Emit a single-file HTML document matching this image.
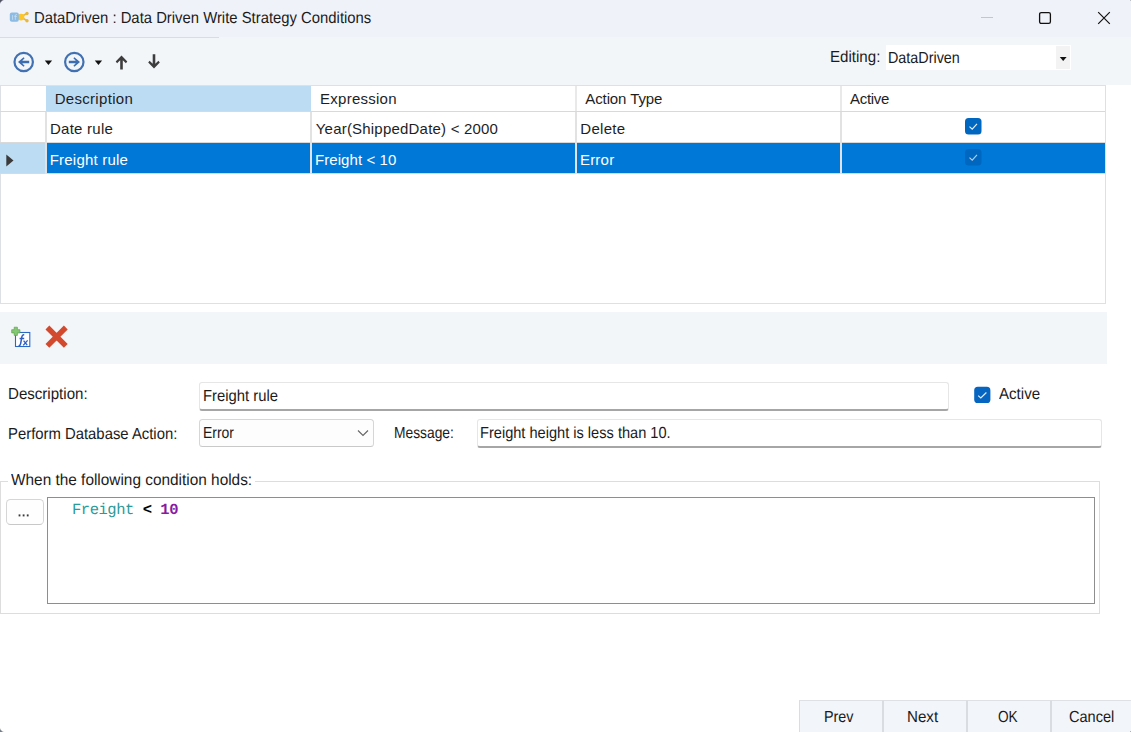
<!DOCTYPE html>
<html><head><meta charset="utf-8">
<style>
*{box-sizing:border-box;margin:0;padding:0}
html,body{width:1131px;height:732px;overflow:hidden;background:#fff;font-family:"Liberation Sans",sans-serif;}
.abs{position:absolute}
.t{position:absolute;white-space:nowrap;line-height:20px;height:20px;color:#1b1b1b;font-size:16px;text-rendering:geometricPrecision;transform-origin:0 50%;margin-top:1px}
.g{position:absolute;white-space:nowrap;line-height:20px;height:20px;color:#1e1e1e;font-size:15px}
.vl{position:absolute;width:2px;background:#e2e2e2}
.hl{position:absolute;height:1px;background:#d9d9d9}
.btn{position:absolute;top:700px;height:33px;background:#f2f5f9;border:1px solid #d9dce1;border-top-color:#dde0e5}
</style>
<style id="fit">
#title{left:33.66px !important;transform:scaleX(0.9280)}
#editing{left:829.75px !important;transform:scaleX(0.9436)}
#ddcombo{left:887.68px !important;transform:scaleX(0.8972)}
#ldesc{left:7.61px !important;transform:scaleX(0.9424)}
#vdesc{left:202.86px !important;transform:scaleX(0.9258)}
#lactive{left:998.86px !important;transform:scaleX(0.9423)}
#lperf{left:7.66px !important;transform:scaleX(0.9288)}
#verr{left:203.29px !important;transform:scaleX(0.8718)}
#lmsg{left:394.49px !important;transform:scaleX(0.8632)}
#vmsg{left:480.46px !important;transform:scaleX(0.9120)}
#lwhen{left:10.61px !important;transform:scaleX(0.9614)}
#bprev{left:824.42px !important;transform:scaleX(0.8965)}
#bnext{left:907.25px !important;transform:scaleX(0.9450)}
#bok{left:998.36px !important;transform:scaleX(0.8533)}
#bcancel{left:1069.49px !important;transform:scaleX(0.9106)}
#h1{left:54.65px !important;letter-spacing:0.311px}
#h2{left:320.12px !important;letter-spacing:0.241px}
#h3{left:585.27px !important;letter-spacing:-0.100px}
#h4{left:850.07px !important;letter-spacing:-0.308px}
#c11{left:50.00px !important;letter-spacing:0.244px}
#c21{left:49.71px !important;letter-spacing:0.217px}
#c12{left:315.75px !important;letter-spacing:0.205px}
#c13{left:580.32px !important;letter-spacing:0.295px}
#c22{left:314.89px !important;letter-spacing:0.097px}
#c23{left:579.90px !important;letter-spacing:0.236px}
</style></head><body>
<!-- title bar -->
<div class="abs" id="titlebar" style="left:0;top:0;width:1131px;height:37px;background:#eff2f9"></div>
<div class="abs" id="toolbar" style="left:0;top:37px;width:1131px;height:48px;background:#f3f6f9"></div>
<div class="abs" style="left:0;top:37px;width:219px;height:1px;background:#d9dce0"></div>
<div class="t" id="title" style="left:34px;top:8px">DataDriven : Data Driven Write Strategy Conditions</div>


<!-- title icon -->
<svg class="abs" id="ticon" style="left:8px;top:10px" width="22" height="14" viewBox="8 10 22 14">
<path d="M20.5 17L26.8 13.6M20.5 17L26.8 20.6" stroke="#e9b93a" stroke-width="1.7" stroke-linecap="round" fill="none"/>
<circle cx="27" cy="13.5" r="1.7" fill="#e8b83a"/><circle cx="27" cy="20.7" r="1.7" fill="#e8b83a"/>
<circle cx="21" cy="17.1" r="3.4" fill="#fcc62b"/>
<rect x="9.8" y="12.5" width="9" height="9.3" rx="2" fill="#8cbbe4"/>
<path d="M12.6 15.2v4.6M15.3 15v4.8M14.3 16.4h2.6M15.3 15.3q0.3-1 1.5-0.8" stroke="#c4dcf2" stroke-width="0.9" fill="none"/>
</svg>
<!-- window buttons -->
<div class="abs" style="left:981px;top:17px;width:12px;height:1px;background:#c4c6cb"></div>
<svg class="abs" style="left:1038px;top:11px" width="14" height="14"><rect x="1.6" y="1.6" width="10.8" height="10.8" rx="1.6" fill="none" stroke="#111" stroke-width="1.3"/></svg>
<svg class="abs" style="left:1097px;top:11px" width="14" height="14"><path d="M1.2 1.2L12.8 12.8M12.8 1.2L1.2 12.8" stroke="#111" stroke-width="1.2" fill="none"/></svg>
<!-- nav toolbar icons -->
<svg class="abs" id="nav" style="left:0;top:44px" width="180" height="36" viewBox="0 44 180 36">
<g fill="none" stroke="#4171b2" stroke-width="2.2">
<circle cx="23.7" cy="62" r="9.2"/><circle cx="74.3" cy="62" r="9.2"/>
</g>
<g fill="#3c6db0" stroke="none">
<path d="M18 62L23.6 57.2L24.6 58.3L22.2 60.8H29.2V63.2H22.2L24.6 65.7L23.6 66.8Z"/>
<path d="M80 62L74.4 57.2L73.4 58.3L75.8 60.8H68.8V63.2H75.8L73.4 65.7L74.4 66.8Z"/>
</g>
<path d="M44.8 60.5h7.3L48.45 64.9z" fill="#111"/>
<path d="M94.8 60.5h7.3L98.45 64.9z" fill="#111"/>
<g fill="#3d3d3d" stroke="none">
<path d="M121.5 55.6L127.3 61.6L125.9 63.2L122.8 60.2V69.5H120.2V60.2L117.1 63.2L115.7 61.6Z"/>
<path d="M154 68.4L159.8 62.4L158.4 60.8L155.3 63.8V54.3H152.7V63.8L149.6 60.8L148.2 62.4Z"/>
</g>
</svg>
<!-- editing combo -->
<div class="t" id="editing" style="left:830px;top:47px">Editing:</div>
<div class="abs" style="left:886px;top:45px;width:185px;height:25px;background:#fff"></div>
<div class="abs" style="left:1056px;top:46px;width:14px;height:23px;background:#f3f3f3"></div>
<div class="t" id="ddcombo" style="left:888px;top:48px">DataDriven</div>
<svg class="abs" style="left:1059px;top:56px" width="9" height="6"><path d="M0.8 1.1h6.8L4.2 4.9z" fill="#111"/></svg>

<!-- grid -->
<div class="abs" id="grid" style="left:0;top:85px;width:1106px;height:219px;background:#fff;border:1px solid #dde0e4"></div>
<div class="abs" style="left:46px;top:86px;width:265px;height:25px;background:#bcdcf4"></div>
<div class="abs" style="left:0;top:143px;width:45px;height:30px;background:#bcdcf4"></div>
<div class="abs" style="left:47px;top:143px;width:1058px;height:30px;background:#0078d7"></div>
<div class="hl" style="left:0;top:111px;width:1105px"></div>
<div class="hl" style="left:0;top:142px;width:1105px"></div>
<div class="hl" style="left:0;top:173px;width:1105px"></div>
<div class="vl" style="left:45px;top:112px;height:62px"></div>
<div class="vl" style="left:310px;top:112px;height:62px"></div>
<div class="vl" style="left:575px;top:112px;height:62px"></div>
<div class="vl" style="left:840px;top:112px;height:62px"></div>
<div class="vl" style="left:575px;top:86px;height:25px;background:#e9e9e9"></div>
<div class="vl" style="left:840px;top:86px;height:25px;background:#e9e9e9"></div>
<div class="g" id="h1" style="left:55px;top:89px">Description</div>
<div class="g" id="h2" style="left:320px;top:89px">Expression</div>
<div class="g" id="h3" style="left:585px;top:89px">Action Type</div>
<div class="g" id="h4" style="left:850px;top:89px">Active</div>
<div class="g" id="c11" style="left:50px;top:119px">Date rule</div>
<div class="g" id="c12" style="left:315px;top:119px">Year(ShippedDate) &lt; 2000</div>
<div class="g" id="c13" style="left:580px;top:119px">Delete</div>
<div class="g" id="c21" style="left:50px;top:150px;color:#fff">Freight rule</div>
<div class="g" id="c22" style="left:315px;top:150px;color:#fff">Freight &lt; 10</div>
<div class="g" id="c23" style="left:580px;top:150px;color:#fff">Error</div>
<svg class="abs" style="left:5px;top:153px" width="10" height="15"><path d="M1.3 1.6L8.5 7.5L1.3 13.4z" fill="#3a3a3a"/></svg>
<svg class="abs" style="left:965px;top:118px" width="17" height="17"><rect x="0" y="0" width="16.5" height="16.5" rx="3.5" fill="#0067c0"/><path d="M4.5 8.6l2.7 2.6L12 5.9" stroke="#eaf2fb" stroke-width="1.1" fill="none"/></svg>
<svg class="abs" style="left:965px;top:149px" width="17" height="17"><rect x="0" y="0" width="16.5" height="16.5" rx="3.5" fill="#0067c0"/><path d="M4.5 8.6l2.7 2.6L12 5.9" stroke="#b5d1ef" stroke-width="1.1" fill="none"/></svg>

<!-- toolbar 2 -->
<div class="abs" style="left:0;top:312px;width:1107px;height:52px;background:#f3f6f9"></div>
<svg class="abs" id="ico1" style="left:10px;top:325px" width="24" height="24" viewBox="10 325 24 24">
<rect x="15.5" y="332.5" width="14.3" height="14" fill="#fff" stroke="#2a68c6" stroke-width="1.1"/>
<path d="M18.6 345.6q1.6 0.3 2.1-2.2l1.1-6.3q0.5-2.6 2.4-2.2M19.6 338.6h4.6" stroke="#2c5fc4" stroke-width="1.5" fill="none"/>
<path d="M23.6 340.6l3.6 4.6M27.6 340.4l-4.4 5" stroke="#2c5fc4" stroke-width="1.35" fill="none"/>
<path d="M14.2 327.2h3.2v2.5h2.5v3.2h-2.5v2.5h-3.2v-2.5h-2.5v-3.2h2.5z" fill="#84c774" stroke="#5aa24c" stroke-width="0.7"/>
</svg>
<svg class="abs" id="ico2" style="left:44px;top:324px" width="26" height="26" viewBox="44 324 26 26"><path d="M47.4 327.5L65.8 345.9M65.8 327.5L47.4 345.9" stroke="#d3492e" stroke-width="5.4" stroke-linecap="butt"/></svg>

<!-- form -->
<div class="t" id="ldesc" style="left:8px;top:384px">Description:</div>
<div class="abs" style="left:199px;top:382px;width:750px;height:29px;background:#fff;border:1px solid #e6e6e6;border-bottom:2px solid #a6a6a6;border-radius:3px"></div>
<div class="t" id="vdesc" style="left:203px;top:386px">Freight rule</div>
<svg class="abs" style="left:974px;top:386px" width="18" height="18"><rect x="0.2" y="0.8" width="16.2" height="16.2" rx="3.6" fill="#0565c0"/><path d="M4.2 9.6l2.6 2.4L12.4 6.5" stroke="#e3eefa" stroke-width="1.15" fill="none"/></svg>
<div class="t" id="lactive" style="left:998px;top:384px">Active</div>

<div class="t" id="lperf" style="left:8px;top:424px">Perform Database Action:</div>
<div class="abs" style="left:199px;top:419px;width:175px;height:28px;background:#fdfdfd;border:1px solid #d6d6d6;border-bottom-color:#c9c9c9;border-radius:3.5px"></div>
<div class="t" id="verr" style="left:203px;top:423px">Error</div>
<svg class="abs" style="left:357px;top:429px" width="12" height="8"><path d="M1 1.5l5 5 5-5" stroke="#666" stroke-width="1.15" fill="none"/></svg>
<div class="t" id="lmsg" style="left:394px;top:423px">Message:</div>
<div class="abs" style="left:477px;top:419px;width:625px;height:29px;background:#fff;border:1px solid #e6e6e6;border-bottom:2px solid #a6a6a6;border-radius:3px"></div>
<div class="t" id="vmsg" style="left:481px;top:423px">Freight height is less than 10.</div>

<!-- group -->
<div class="abs" style="left:0;top:481px;width:1100px;height:133px;border:1px solid #dddddd"></div>
<div class="abs" style="left:8px;top:472px;width:247px;height:18px;background:#fff"></div>
<div class="t" id="lwhen" style="left:10px;top:470px">When the following condition holds:</div>
<div class="abs" style="left:6px;top:499px;width:38px;height:26px;background:#fefefe;border:1px solid #d6d6d6;border-bottom-color:#c8c8c8;border-radius:4.5px"></div>
<svg class="abs" id="dots" style="left:17px;top:513px" width="14" height="5"><rect x="1.6" y="1.4" width="1.8" height="2" fill="#3a3a3a"/><rect x="5.7" y="1.4" width="1.8" height="2" fill="#3a3a3a"/><rect x="9.8" y="1.4" width="1.8" height="2" fill="#3a3a3a"/></svg>
<div class="abs" style="left:47px;top:497px;width:1048px;height:107px;background:#fff;border:1px solid #8e8e8e"></div>
<div class="t" id="code" style="left:72px;top:500px;font-family:'Liberation Mono',monospace;font-size:15.5px;letter-spacing:-0.47px;transform:none;margin-top:0"><span style="color:#2b9a9a">Freight</span> <b style="color:#000">&lt;</b> <b style="color:#8b1aa0">10</b></div>

<!-- buttons -->
<div class="btn" style="left:799px;width:84px"></div>
<div class="btn" style="left:883px;width:84px"></div>
<div class="btn" style="left:967px;width:84px"></div>
<div class="btn" style="left:1051px;width:84px"></div>
<div class="t" id="bprev" style="left:825px;top:707px">Prev</div>
<div class="t" id="bnext" style="left:908px;top:707px">Next</div>
<div class="t" id="bok" style="left:997px;top:707px">OK</div>
<div class="t" id="bcancel" style="left:1069px;top:707px">Cancel</div>
<!-- window corners -->
<div class="abs" style="left:0;top:0;width:5px;height:5px;background:radial-gradient(circle at 7px 7px,rgba(70,74,88,0) 7.2px,rgba(70,74,88,.95) 8.6px)"></div>
<div class="abs" style="left:1128px;top:0;width:3px;height:3px;background:radial-gradient(circle at -4px 7px,rgba(130,134,140,0) 8.6px,rgba(130,134,140,.9) 9.8px)"></div>
<div class="abs" style="left:1128px;top:729px;width:3px;height:3px;background:radial-gradient(circle at -4px -4px,rgba(90,94,100,0) 8.6px,rgba(90,94,100,.9) 9.8px)"></div>
<div class="abs" style="left:0;top:727px;width:5px;height:5px;background:radial-gradient(circle at 7px -2px,rgba(110,116,124,0) 7.2px,rgba(110,116,124,.95) 8.6px)"></div>
</body></html>
